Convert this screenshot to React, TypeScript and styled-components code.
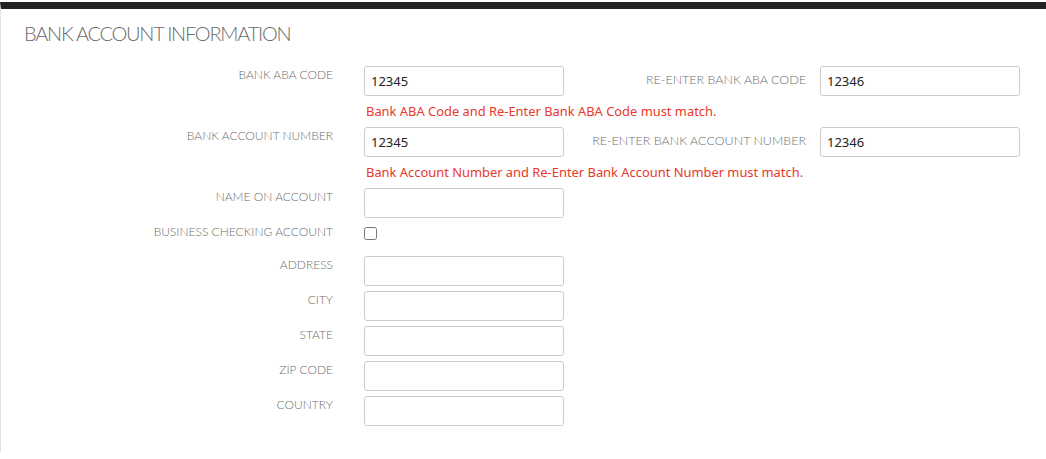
import React from "react";
import styled, { createGlobalStyle } from "styled-components";

const GlobalStyle = createGlobalStyle`
  html, body {
    margin: 0;
    padding: 0;
    background: #ffffff;
  }
  body {
    font-family: "Lato", "Liberation Sans", sans-serif;
  }
`;

type Field = { label: string; value?: string };

const addressFields: Field[] = [
  { label: "ADDRESS" },
  { label: "CITY" },
  { label: "STATE" },
  { label: "ZIP CODE" },
  { label: "COUNTRY" },
];

const App = () => {
  return (
    <Page>
      <GlobalStyle />
      <Panel>
        <Title>BANK ACCOUNT INFORMATION</Title>
        <Form>
          <Row>
            <Label>BANK ABA CODE</Label>
            <Input defaultValue="12345" />
            <SideLabel>RE-ENTER BANK ABA CODE</SideLabel>
            <Input defaultValue="12346" />
          </Row>
          <ErrorText>Bank ABA Code and Re-Enter Bank ABA Code must match.</ErrorText>

          <Row>
            <Label>BANK ACCOUNT NUMBER</Label>
            <Input defaultValue="12345" />
            <SideLabel>RE-ENTER BANK ACCOUNT NUMBER</SideLabel>
            <Input defaultValue="12346" />
          </Row>
          <ErrorText>
            Bank Account Number and Re-Enter Bank Account Number must match.
          </ErrorText>

          <Row $gap>
            <Label>NAME ON ACCOUNT</Label>
            <Input />
          </Row>

          <Row $gap $tall>
            <Label>BUSINESS CHECKING ACCOUNT</Label>
            <Checkbox type="checkbox" />
          </Row>

          {addressFields.map((f) => (
            <Row key={f.label} $gap>
              <Label>{f.label}</Label>
              <Input />
            </Row>
          ))}
        </Form>
      </Panel>
    </Page>
  );
};

export default App;

const Page = styled.div`
  padding-top: 2px;
  min-height: 457px;
`;

const Panel = styled.div`
  border-top: 7px solid #232323;
  border-left: 1px solid #e2e2e2;
  min-height: 450px;
  padding: 12px 0 0 22px;
  box-sizing: border-box;
`;

const Title = styled.h2`
  margin: 0 0 0 1px;
  font-family: "Lato", "Liberation Sans", sans-serif;
  font-weight: 300;
  font-size: 20px;
  line-height: 24px;
  letter-spacing: -1.25px;
  color: #6a6a6a;
`;

const Form = styled.div`
  margin-top: 21px;
  display: flex;
  flex-direction: column;
`;

const Row = styled.div<{ $gap?: boolean; $tall?: boolean }>`
  display: flex;
  align-items: flex-start;
  margin-bottom: ${({ $gap }) => ($gap ? "5px" : "0")};
  min-height: ${({ $tall }) => ($tall ? "28px" : "30px")};
`;

const Label = styled.label`
  width: 310px;
  padding: 1px 31px 0 0;
  text-align: right;
  font-family: "Lato", "Liberation Sans", sans-serif;
  font-weight: 300;
  font-size: 12px;
  line-height: 16px;
  letter-spacing: 0;
  color: #6e6e6e;
  flex-shrink: 0;
`;

const SideLabel = styled(Label)`
  width: 242px;
  padding: 6px 14px 0 0;
  font-size: 12.5px;
`;

const Input = styled.input`
  box-sizing: border-box;
  width: 200px;
  height: 30px;
  border: 1px solid #cccccc;
  border-radius: 3px;
  padding: 0 6px;
  font-family: "Noto Sans", "Open Sans", sans-serif;
  font-size: 13px;
  color: #222222;
  background: #ffffff;
  outline: none;
  flex-shrink: 0;
`;

const Checkbox = styled.input`
  margin: 4px 0 0 0;
  width: 13px;
  height: 13px;
`;

const ErrorText = styled.div`
  margin: 6px 0 7px 343px;
  font-family: "Noto Sans", "Open Sans", sans-serif;
  font-size: 12.9px;
  line-height: 18px;
  color: #e8392a;
`;
